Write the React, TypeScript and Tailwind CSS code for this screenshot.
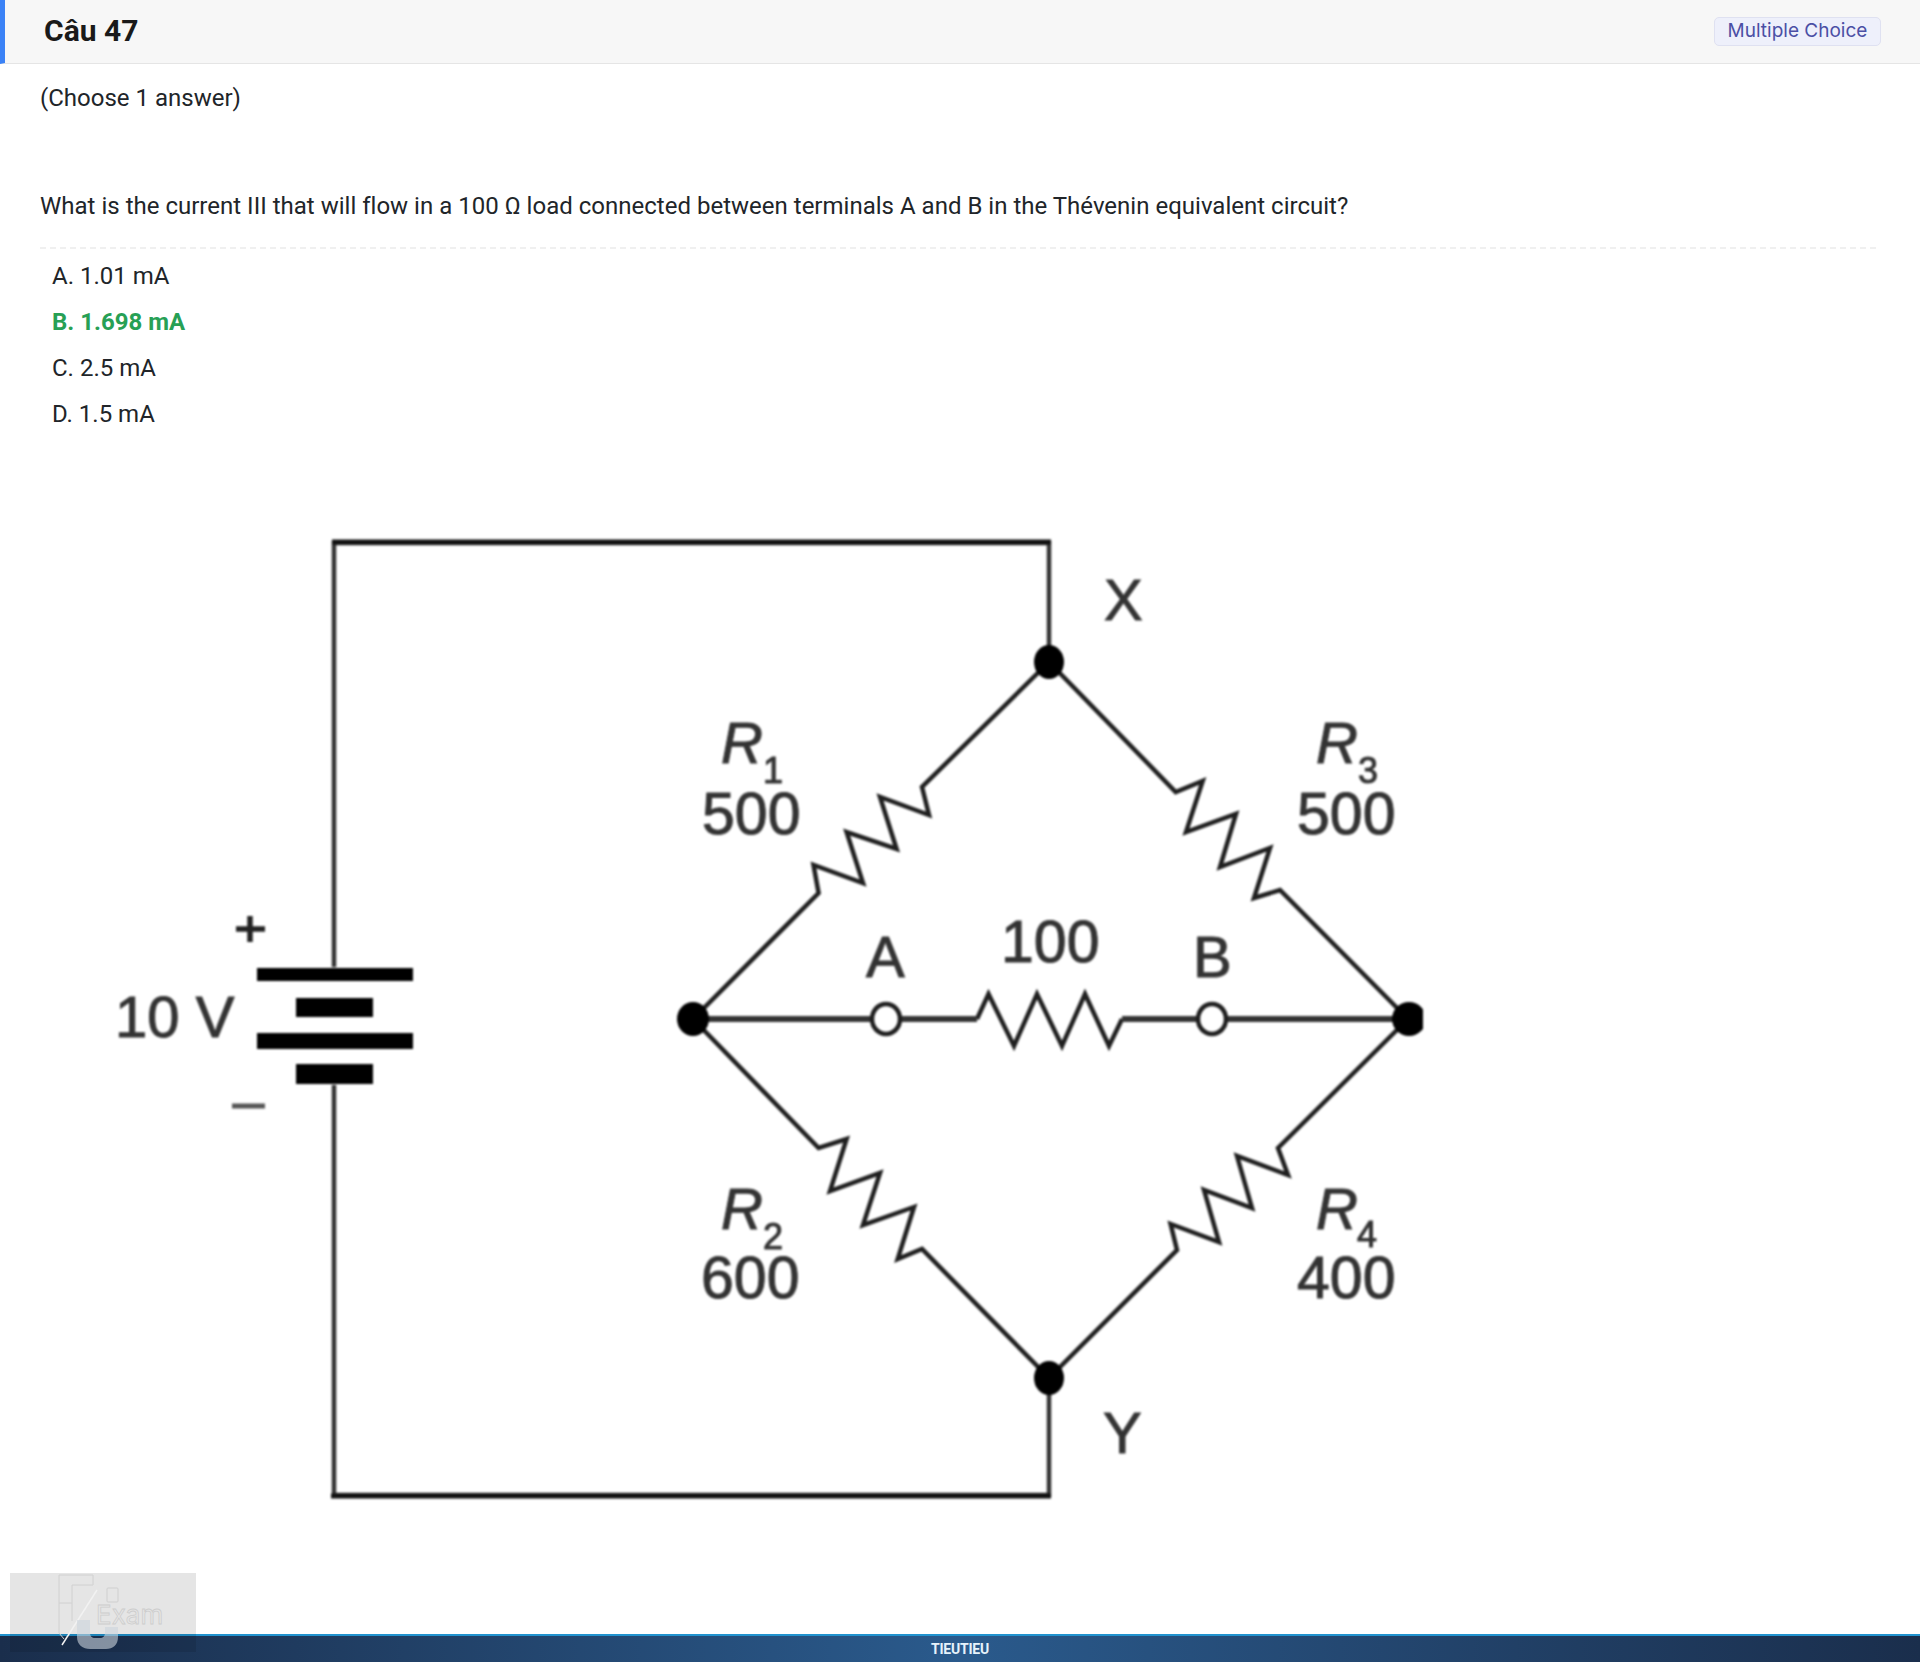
import React from 'react';

const answers = [
  { id: 'a', text: 'A. 1.01 mA' },
  { id: 'b', text: 'B. 1.698 mA', correct: true },
  { id: 'c', text: 'C. 2.5 mA' },
  { id: 'd', text: 'D. 1.5 mA' },
];

const Circuit = () => (
  <svg
    viewBox="0 500 1423 1030"
    width={1423}
    height={1030}
    className="block blur-[1px]"
    style={{ fontFamily: '"Liberation Sans", Arial, sans-serif' }}
  >
    {/* outer loop */}
    <path d="M334 967V543H1049V662" fill="none" stroke="#333" strokeWidth={4.5} />
    <path d="M334 1085V1495H1049V1378" fill="none" stroke="#333" strokeWidth={4.5} />
    <path d="M332 542H1051" stroke="#111" strokeWidth={5} />
    <path d="M331 1496H1051" stroke="#111" strokeWidth={5} />

    {/* battery */}
    <rect x={257} y={968} width={156} height={13} fill="#000" />
    <rect x={296} y={998} width={77} height={19} fill="#000" />
    <rect x={257} y={1033} width={156} height={16} fill="#000" />
    <rect x={296} y={1064} width={77} height={20} fill="#000" />
    <path d="M236 929H265M250 916V942" stroke="#222" strokeWidth={5.5} />
    <path d="M232 1106H265" stroke="#555" strokeWidth={5} />

    {/* bridge arms */}
    <g fill="none" stroke="#1f1f1f" strokeWidth={4.5} strokeLinejoin="miter">
      <path d="M693 1019L818.6 893L813.5 865L863 883L846.6 832L896.6 849L880 797L929 815L922 787L1049 662" />
      <path d="M1049 662L1175.7 792L1202.7 781L1186 832L1236 814L1220 867L1270 848L1254 898L1280 890L1408 1019" />
      <path d="M693 1019L818.6 1148L846.6 1139L830 1191L880 1173L863 1225L914 1207L897.7 1259L922 1249L1049 1378" />
      <path d="M1408 1019L1278 1148L1288 1175L1237 1156L1252 1208L1204 1190L1219 1242L1170.6 1224L1177 1250L1049 1378" />
      <path d="M977 1019L988.5 994L1014 1046L1037 994L1062 1046L1085 994L1109 1046L1122 1019" />
    </g>
    <path d="M693 1019H977M1122 1019H1408" stroke="#333" strokeWidth={6} fill="none" />

    {/* nodes */}
    <ellipse cx={1049} cy={662} rx={15} ry={17} fill="#000" />
    <ellipse cx={1049} cy={1378} rx={15} ry={17} fill="#000" />
    <ellipse cx={693} cy={1019} rx={16} ry={17} fill="#000" />
    <ellipse cx={1409} cy={1019} rx={17} ry={17} fill="#000" />
    <ellipse cx={886} cy={1019} rx={14} ry={15} fill="#fff" stroke="#1f1f1f" strokeWidth={4.5} />
    <ellipse cx={1212} cy={1019} rx={14} ry={15} fill="#fff" stroke="#1f1f1f" strokeWidth={4.5} />

    {/* labels */}
    <g fill="#333" stroke="#333" strokeWidth={1} fontSize={58}>
      <text x={115} y={1037}>10 V</text>
      <text x={1104} y={620}>X</text>
      <text x={1103} y={1453}>Y</text>
      <text x={866} y={977}>A</text>
      <text x={1193} y={977}>B</text>
      <text x={1001} y={962} fontSize={59}>100</text>
      <text x={702} y={834} fontSize={59}>500</text>
      <text x={1297} y={834} fontSize={59}>500</text>
      <text x={701} y={1298} fontSize={59}>600</text>
      <text x={1297} y={1298} fontSize={59}>400</text>
      <text x={721} y={763} fontStyle="italic">R</text>
      <text x={1316} y={763} fontStyle="italic">R</text>
      <text x={721} y={1229} fontStyle="italic">R</text>
      <text x={1316} y={1229} fontStyle="italic">R</text>
      <text x={763} y={783} fontSize={36}>1</text>
      <text x={1358} y={783} fontSize={36}>3</text>
      <text x={763} y={1249} fontSize={36}>2</text>
      <text x={1357} y={1247} fontSize={36}>4</text>
    </g>
  </svg>
);

const Watermark = () => (
  <div className="absolute left-[10px] top-[1573px] h-[79px] w-[186px] bg-black/10">
    <svg viewBox="0 0 186 79" width={186} height={79} className="absolute left-0 top-0 blur-[0.3px]" fill="none">
      <path d="M49 2H83V12H62V30H49Z" stroke="#d0d0d0" strokeWidth={1} />
      <path d="M49 30V60L54 66M62 30V48" stroke="#d0d0d0" strokeWidth={1} />
      <path d="M87 17L52 72" stroke="#f2f2f2" strokeWidth={1.5} />
      <rect x={97} y={15} width={11} height={14} stroke="#cfcfcf" strokeWidth={1} rx={1} />
      <path
        d="M67 47V64C67 72 73 76 80 76H96C103 76 108 72 108 64V54H95V60C95 63 93 65 90 65H85C82 65 80 63 80 60V47Z"
        fill="#ccd4dc"
        fillOpacity={0.6}
      />
    </svg>
    <span
      className="absolute left-[86px] top-[24px] text-[26px] leading-[36px] text-transparent [-webkit-text-stroke:0.8px_#cdcdcd]"
      style={{ fontFamily: 'Inter, sans-serif' }}
    >
      Exam
    </span>
  </div>
);

export default function App() {
  return (
    <div className="relative flex h-[1662px] w-full flex-col overflow-hidden bg-white font-['Roboto',sans-serif] text-[#212529]">
      <header className="flex h-[64px] shrink-0 items-center justify-between border-b border-[#e5e5e5] border-l-[5px] border-l-[#3b82f6] bg-[#f7f7f7] pl-[39px] pr-[39px]">
        <h2 className="mb-[2px] text-[30px] font-bold leading-none text-[#1a1a1a]">Câu 47</h2>
        <span className="flex h-[29px] w-[167px] items-center justify-center rounded-[5px] border border-[#dfe1f1] bg-[#eef0fb] font-['Inter',sans-serif] text-[19px] text-[#4b4fa5]">
          Multiple Choice
        </span>
      </header>

      <main className="flex-1 px-[40px]">
        <p className="pt-[18px] text-[24px] leading-[32px]">(Choose 1 answer)</p>
        <p className="mt-[76px] text-[24px] leading-[32px] tracking-[0.01px]">
          What is the current III that will flow in a 100 Ω load connected between terminals A and B in the Thévenin equivalent circuit?
        </p>
        <div className="mr-[4px] mt-[25px] border-t-2 border-dashed border-[#f0f0f0]" />
        <ul className="mt-[4px] flex flex-col pl-[12px] text-[24px]">
          {answers.map((a) => (
            <li
              key={a.id}
              className={`h-[46px] leading-[46px] ${a.correct ? 'font-bold text-[#27a055]' : ''}`}
            >
              {a.text}
            </li>
          ))}
        </ul>
      </main>

      <div className="absolute left-0 top-[500px]">
        <Circuit />
      </div>

      <footer className="flex h-[28px] shrink-0 items-center justify-center border-t-2 border-[#2193cf] bg-gradient-to-r from-[#1a2e4c] via-[#2a5a8c] to-[#1a2e4c] pb-[1px]">
        <span className="text-[14px] font-bold leading-none tracking-[-0.2px] text-[#e6f2fb]">TIEUTIEU</span>
      </footer>

      <Watermark />
    </div>
  );
}
